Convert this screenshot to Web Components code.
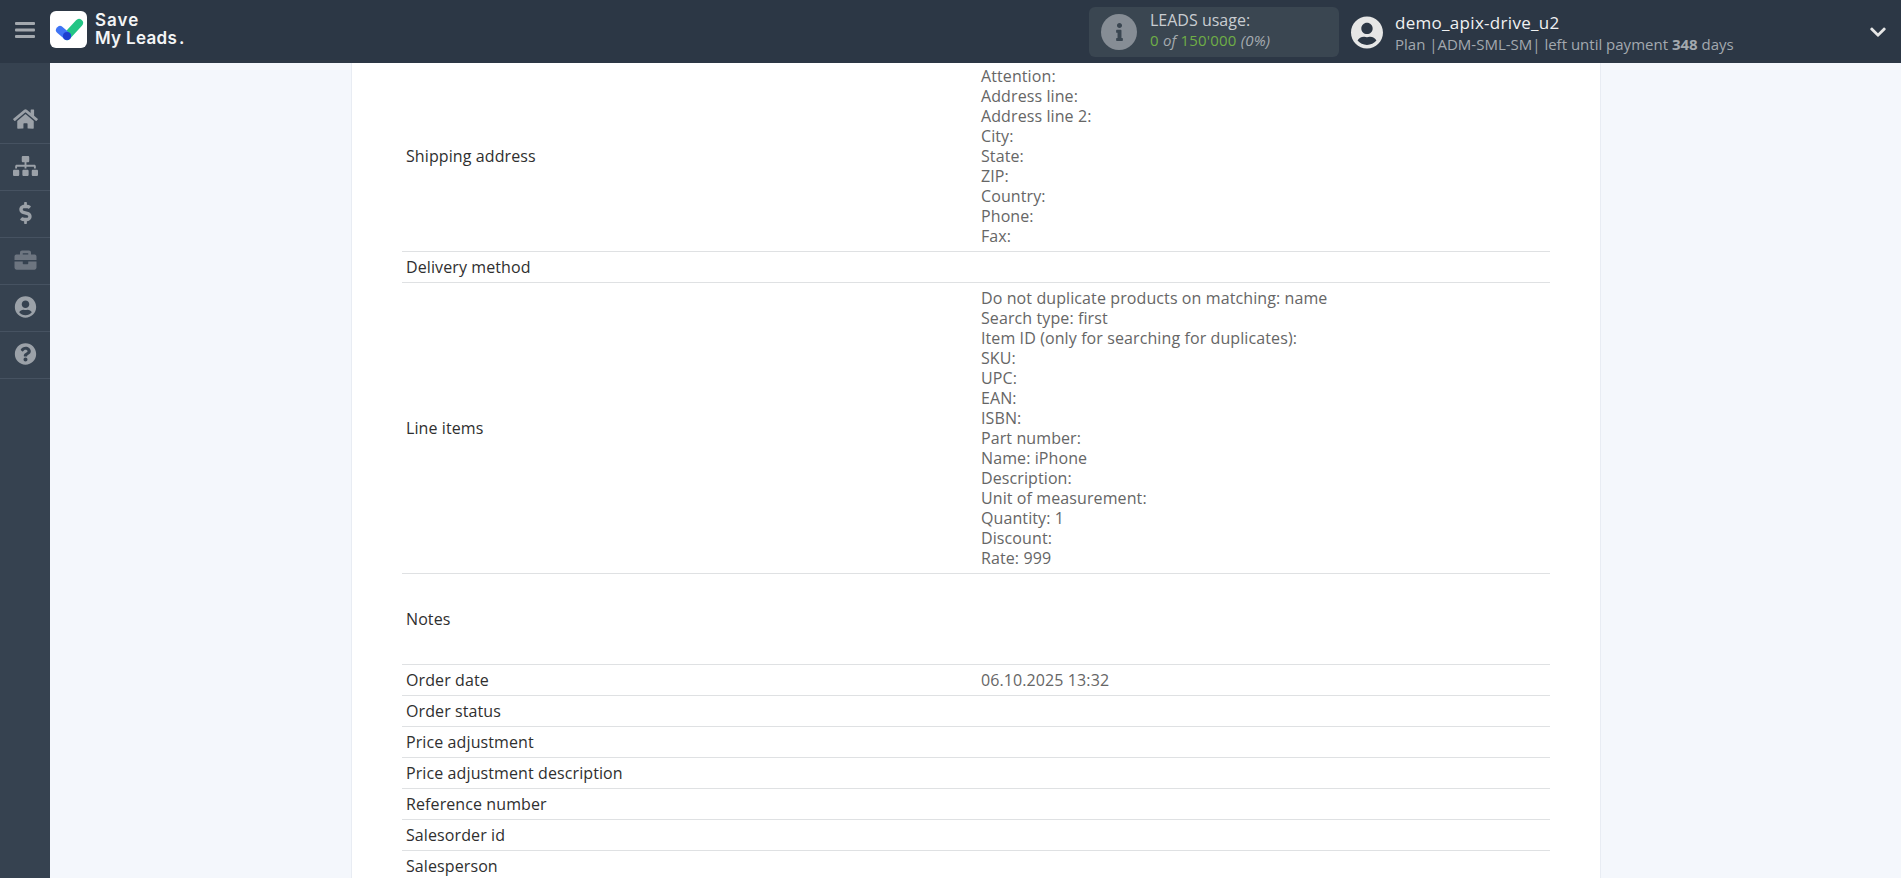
<!DOCTYPE html>
<html>
<head>
<meta charset="utf-8">
<title>Save My Leads</title>
<style>
  html, body {
    margin: 0;
    height: 100%;
    overflow: hidden;
    background-color: #f4f7fc;
    font-family: "Open Sans", "Liberation Sans", sans-serif;
  }
  body {
    display: flex;
    flex-direction: column;
  }
</style>
</head>
<body>
<app-header></app-header>
<div style="display:flex;flex:1;min-height:0">
  <side-menu></side-menu>
  <order-card>
    <order-row label="Shipping address" clipped>Attention:<br>Address line:<br>Address line 2:<br>City:<br>State:<br>ZIP:<br>Country:<br>Phone:<br>Fax:</order-row>
    <order-row label="Delivery method"></order-row>
    <order-row label="Line items">Do not duplicate products on matching: name<br>Search type: first<br>Item ID (only for searching for duplicates):<br>SKU:<br>UPC:<br>EAN:<br>ISBN:<br>Part number:<br>Name: iPhone<br>Description:<br>Unit of measurement:<br>Quantity: 1<br>Discount:<br>Rate: 999</order-row>
    <order-row label="Notes"><br><br><br><br></order-row>
    <order-row label="Order date">06.10.2025 13:32</order-row>
    <order-row label="Order status"></order-row>
    <order-row label="Price adjustment"></order-row>
    <order-row label="Price adjustment description"></order-row>
    <order-row label="Reference number"></order-row>
    <order-row label="Salesorder id"></order-row>
    <order-row label="Salesperson"></order-row>
  </order-card>
</div>
<script>
const ICONS = {
  home: ['0 0 576 512', 'M280.37 148.26L96 300.11V464a16 16 0 0 0 16 16l112.06-.29a16 16 0 0 0 15.92-16V368a16 16 0 0 1 16-16h64a16 16 0 0 1 16 16v95.64a16 16 0 0 0 16 16.05L464 480a16 16 0 0 0 16-16V300L295.67 148.26a12.19 12.19 0 0 0-15.3 0zM571.6 251.47L488 182.56V44.05a12 12 0 0 0-12-12h-56a12 12 0 0 0-12 12v72.61L318.47 43a48 48 0 0 0-61 0L4.34 251.47a12 12 0 0 0-1.6 16.9l25.5 31A12 12 0 0 0 45.15 301l235.22-193.74a12.19 12.19 0 0 1 15.3 0L530.9 301a12 12 0 0 0 16.9-1.6l25.5-31a12 12 0 0 0-1.7-16.93z'],
  sitemap: ['0 0 640 512', 'M128 352H32c-17.67 0-32 14.33-32 32v96c0 17.67 14.33 32 32 32h96c17.67 0 32-14.33 32-32v-96c0-17.67-14.33-32-32-32zm-24-80h192v48h48v-48h192v48h48v-57.59c0-21.17-17.23-38.41-38.41-38.41H344v-64h40c17.67 0 32-14.33 32-32V32c0-17.67-14.33-32-32-32H256c-17.67 0-32 14.33-32 32v96c0 17.67 14.33 32 32 32h40v64H94.41C73.23 224 56 241.23 56 262.41V320h48v-48zm264 80h-96c-17.67 0-32 14.33-32 32v96c0 17.67 14.33 32 32 32h96c17.67 0 32-14.33 32-32v-96c0-17.67-14.33-32-32-32zm240 0h-96c-17.67 0-32 14.33-32 32v96c0 17.67 14.33 32 32 32h96c17.67 0 32-14.33 32-32v-96c0-17.67-14.33-32-32-32z'],
  dollar: ['0 0 288 512', 'M209.2 233.4l-108-31.6C88.7 198.2 80 186.5 80 173.5c0-16.3 13.2-29.5 29.5-29.5h66.3c12.2 0 24.2 3.7 34.2 10.5 6.1 4.1 14.3 3.1 19.5-2l34.8-34c7.1-6.9 6.1-18.4-1.8-24.5C238 74.8 207.4 64.1 176 64V16c0-8.8-7.2-16-16-16h-32c-8.8 0-16 7.2-16 16v48h-2.5C45.8 64-5.4 118.7.5 183.6c4.2 46.1 39.4 83.6 83.8 96.6l102.5 30c12.5 3.7 21.2 15.3 21.2 28.3 0 16.3-13.2 29.5-29.5 29.5h-66.3C100 368 88 364.3 78 357.5c-6.1-4.1-14.3-3.1-19.5 2l-34.8 34c-7.1 6.9-6.1 18.4 1.8 24.5 24.5 19.2 55.1 29.9 86.5 30v48c0 8.8 7.2 16 16 16h32c8.8 0 16-7.2 16-16v-48.2c46.6-.9 90.3-28.6 105.7-72.7 21.5-61.6-14.6-124.8-72.5-141.7z'],
  briefcase: ['0 0 512 512', 'M320 336c0 8.84-7.16 16-16 16h-96c-8.84 0-16-7.16-16-16v-48H0v144c0 25.6 22.4 48 48 48h416c25.6 0 48-22.4 48-48V288H320v48zm144-208h-80V80c0-25.6-22.4-48-48-48H176c-25.6 0-48 22.4-48 48v48H48c-25.6 0-48 22.4-48 48v80h512v-80c0-25.6-22.4-48-48-48zm-144 0H192V96h128v32z'],
  user: ['0 0 496 512', 'M248 8C111 8 0 119 0 256s111 248 248 248 248-111 248-248S385 8 248 8zm0 96c48.6 0 88 39.4 88 88s-39.4 88-88 88-88-39.4-88-88 39.4-88 88-88zm0 344c-58.7 0-111.3-26.6-146.5-68.2 18.8-35.4 55.6-59.8 98.5-59.8 2.4 0 4.8.4 7.1 1.1 13 4.2 26.6 6.9 40.9 6.9 14.3 0 28-2.7 40.9-6.9 2.3-.7 4.7-1.1 7.1-1.1 42.9 0 79.7 24.4 98.5 59.8C359.3 421.4 306.7 448 248 448z'],
  help: ['0 0 512 512', 'M504 256c0 136.997-111.043 248-248 248S8 392.997 8 256C8 119.083 119.043 8 256 8s248 111.083 248 248zM262.655 90c-54.497 0-89.255 22.957-116.549 63.758-3.536 5.286-2.353 12.415 2.715 16.258l34.699 26.31c5.205 3.947 12.621 3.008 16.665-2.122 17.864-22.658 30.113-35.797 57.303-35.797 20.429 0 45.698 13.148 45.698 32.958 0 14.976-12.363 22.667-32.534 33.976C247.128 238.528 216 254.941 216 296v4c0 6.627 5.373 12 12 12h56c6.627 0 12-5.373 12-12v-1.333c0-28.462 83.186-29.647 83.186-106.667 0-58.002-60.165-102-116.531-102zM256 338c-25.365 0-46 20.635-46 46 0 25.364 20.635 46 46 46s46-20.636 46-46c0-25.365-20.635-46-46-46z'],
  info: ['0 0 192 512', 'M20 424.229h20V279.771H20c-11.046 0-20-8.954-20-20V212c0-11.046 8.954-20 20-20h112c11.046 0 20 8.954 20 20v212.229h20c11.046 0 20 8.954 20 20V492c0 11.046-8.954 20-20 20H20c-11.046 0-20-8.954-20-20v-47.771c0-11.046 8.954-20 20-20zM96 0C56.235 0 24 32.235 24 72s32.235 72 72 72 72-32.235 72-72S135.764 0 96 0z'],
  chevron: ['0 0 448 512', 'M207.029 381.476L12.686 187.132c-9.373-9.373-9.373-24.569 0-33.941l22.667-22.667c9.357-9.357 24.522-9.375 33.901-.04L224 284.505l154.745-154.021c9.379-9.335 24.544-9.317 33.901.04l22.667 22.667c9.373 9.373 9.373 24.569 0 33.941L240.971 381.476c-9.373 9.372-24.569 9.372-33.942 0z']
}

/**
 * Returns the svg markup of an icon
 *
 * @param {string} name
 * @returns {string} svg
 */
const icon = name => `<svg viewBox="${ICONS[name][0]}" fill="currentColor"><path d="${ICONS[name][1]}"></path></svg>`

const headerTemplate = document.createElement('template')
headerTemplate.innerHTML = `
<style>
  :host {
    display: flex;
    align-items: center;
    height: 63px;
    flex: none;
    background-color: #2c3745;
    color: #fff;
  }
  svg { display: block; }
  #bars { width: 20px; height: 16px; margin: -3px 0 0 15px; flex: none; color: #a3a8ae; }
  #logo { margin: -4px 0 0 15px; width: 37px; height: 37px; flex: none; }
  #brand {
    margin: -5px 0 0 8px;
    width: 150px;
    flex: none;
    font: 600 17px/18px Inter, "Noto Sans", sans-serif;
    letter-spacing: 0.3px;
    color: #f4f5f6;
  }
  #save { letter-spacing: 1px; }
  #dot { margin-left: 2px; }
  #usage {
    margin-left: 844px;
    width: 250px;
    height: 50px;
    flex: none;
    box-sizing: border-box;
    display: flex;
    align-items: center;
    padding-left: 12px;
    border-radius: 6px;
    background-color: #3a4651;
    font-size: 15px;
    line-height: 20px;
    color: #c9cdd1;
  }
  #circle {
    width: 36px;
    height: 36px;
    flex: none;
    border-radius: 50%;
    background-color: #868d95;
    color: #3a4651;
    display: flex;
    align-items: center;
    justify-content: center;
    margin-right: 13px;
  }
  #circle svg { width: 9px; height: 18px; }
  #lines { margin-top: -3px; letter-spacing: 0.2px; }
  #title { font-size: 16px; letter-spacing: 0; }
  #count { color: #6fae46; }
  em { color: #a5abb0; }
  #avatar { margin-left: 12px; width: 32px; height: 32px; flex: none; color: #e6e6e6; }
  #user { margin-left: 12px; white-space: nowrap; }
  #name { font-size: 17px; line-height: 22px; letter-spacing: 0.3px; color: #f0f1f2; margin-top: 3px; }
  #plan { font-size: 15px; line-height: 20px; color: #a3a9af; }
  #chevron { width: 16px; height: 18px; margin-left: auto; margin-right: 15px; flex: none; color: #e6e6e6; }
</style>
<div id="bars">
  <svg viewBox="0 0 20 16" width="20" height="16" fill="currentColor">
    <rect width="20" height="3" rx="1"></rect>
    <rect y="6.5" width="20" height="3" rx="1"></rect>
    <rect y="13" width="20" height="3" rx="1"></rect>
  </svg>
</div>
<div id="logo">
  <svg viewBox="0 0 37 37" width="37" height="37">
    <rect width="37" height="37" rx="6" fill="#fff"></rect>
    <path d="M17 25 L29 12" stroke="#23c585" stroke-width="8" stroke-linecap="round" fill="none"></path>
    <path d="M10 19 L17 25" stroke="#3f74f5" stroke-width="8" stroke-linecap="round" fill="none"></path>
    <circle cx="17" cy="25" r="4" fill="#1c3fd0"></circle>
  </svg>
</div>
<div id="brand"><span id="save">Save</span><br>My Leads<span id="dot">.</span></div>
<div id="usage">
  <div id="circle"></div>
  <div id="lines">
    <div id="title">LEADS usage:</div>
    <div><span id="count">0 <em>of</em> 150'000</span> <em>(0%)</em></div>
  </div>
</div>
<div id="avatar"></div>
<div id="user">
  <div id="name">demo_apix-drive_u2</div>
  <div id="plan">Plan |ADM-SML-SM| left until payment <b>348</b> days</div>
</div>
<div id="chevron"></div>
`

/**
 * The dark bar at the top of the page
 */
class AppHeader extends HTMLElement {
  constructor () {
    super()
    this.attachShadow({ mode: 'open' })
    this.shadowRoot.appendChild(headerTemplate.content.cloneNode(true))
    this.shadowRoot.querySelector('#circle').innerHTML = icon('info')
    this.shadowRoot.querySelector('#avatar').innerHTML = icon('user')
    this.shadowRoot.querySelector('#chevron').innerHTML = icon('chevron')
  }
}

const menuTemplate = document.createElement('template')
menuTemplate.innerHTML = `
<style>
  :host {
    display: block;
    width: 50px;
    flex: none;
    box-sizing: border-box;
    padding-top: 34px;
    background-color: #364250;
  }
  .item {
    height: 47px;
    box-sizing: border-box;
    padding-bottom: 2px;
    border-bottom: 1px solid #465261;
    display: flex;
    align-items: center;
    justify-content: center;
    color: #9ba1a8;
  }
  .item.dim { color: #6d7580; }
  svg { height: 22px; width: 25px; display: block; }
</style>
<div id="items"></div>
`

// Left column with the section icons
class SideMenu extends HTMLElement {
  constructor () {
    super()
    this.attachShadow({ mode: 'open' })
    this.shadowRoot.appendChild(menuTemplate.content.cloneNode(true))
    const items = this.shadowRoot.querySelector('#items')
    for (const name of ['home', 'sitemap', 'dollar', 'briefcase', 'user', 'help']) {
      const item = document.createElement('div')
      item.className = name === 'briefcase' ? 'item dim' : 'item'
      item.innerHTML = icon(name)
      items.appendChild(item)
    }
  }
}

const cardTemplate = document.createElement('template')
cardTemplate.innerHTML = `
<style>
  :host {
    display: block;
    flex: none;
    width: 1250px;
    box-sizing: border-box;
    margin-left: 301px;
    padding: 0 50px;
    overflow: hidden;
    background-color: #fff;
    border-left: 1px solid #e8ecf3;
    border-right: 1px solid #e8ecf3;
  }
</style>
<slot></slot>
`

// White card in the middle of the page
class OrderCard extends HTMLElement {
  constructor () {
    super()
    this.attachShadow({ mode: 'open' })
    this.shadowRoot.appendChild(cardTemplate.content.cloneNode(true))
  }
}

const rowTemplate = document.createElement('template')
rowTemplate.innerHTML = `
<style>
  :host {
    display: grid;
    grid-template-columns: 50% 50%;
    align-items: center;
    border-bottom: 1px solid #dfe1e3;
    font-size: 16px;
    line-height: 20px;
    letter-spacing: 0.1px;
  }
  :host([clipped]) #label, :host([clipped]) #value { padding-top: 3px; }
  #label { padding: 5px 4px; color: #2f2f2f; }
  #value { padding: 5px 4px 5px 5px; color: #666; min-height: 20px; }
</style>
<div id="label"></div>
<div id="value"><slot></slot></div>
`

// One line of the order table: a label and its value
class OrderRow extends HTMLElement {
  constructor () {
    super()
    this.attachShadow({ mode: 'open' })
    this.shadowRoot.appendChild(rowTemplate.content.cloneNode(true))
    this.shadowRoot.querySelector('#label').textContent = this.getAttribute('label')
  }
}

customElements.define('app-header', AppHeader)
customElements.define('side-menu', SideMenu)
customElements.define('order-card', OrderCard)
customElements.define('order-row', OrderRow)
</script>
</body>
</html>
